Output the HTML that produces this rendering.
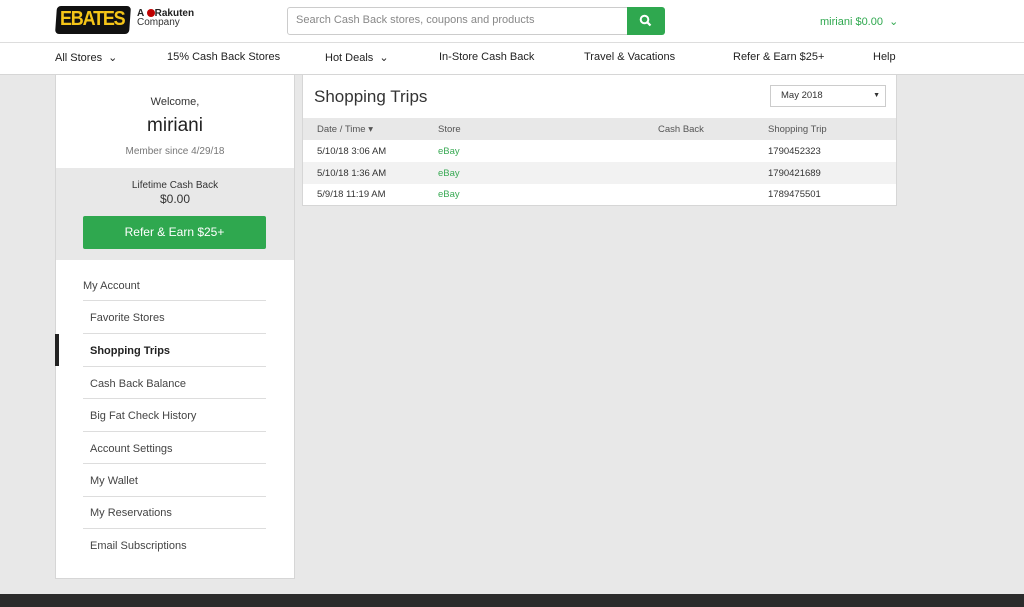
<!DOCTYPE html>
<html><head><meta charset="utf-8"><style>
*{margin:0;padding:0;box-sizing:border-box}
body{width:1024px;height:607px;background:#e8e8e8;font-family:"Liberation Sans",sans-serif;color:#333;position:relative;overflow:hidden;font-size:11px}
.abs{position:absolute}
#hdr{left:0;top:0;width:1024px;height:43px;background:#fff;border-bottom:1px solid #ddd}
#nav{left:0;top:43px;width:1024px;height:32px;background:#fff;border-bottom:1px solid #d6d6d6}
.nv{top:51px;font-size:11px;color:#222}
#foot{left:0;top:594px;width:1024px;height:13px;background:#2b2b2b}
#side{left:55px;top:75px;width:240px;height:504px;background:#fff;border:1px solid #d6d6d6;border-top:none}
.mi{position:absolute;left:34px;font-size:11px;color:#444}
.ln{position:absolute;left:27px;width:183px;height:1px;background:#ddd}
#main{left:302px;top:75px;width:595px;height:131px;background:#fff;border:1px solid #d6d6d6;border-top:none}
.row{position:absolute;left:0;width:593px;height:22px;font-size:9.5px;line-height:23px}
.row span{position:absolute}
</style></head><body>
<div id="hdr" class="abs"></div>
<div class="abs" style="left:56px;top:6px;width:74px;height:28px;background:#111;border-radius:4px;transform:skewX(-4deg)"></div>
<div class="abs" style="left:60px;top:8px;font:bold 18px 'Liberation Sans';color:#f5c518;letter-spacing:-1.2px;transform:scaleY(1.15)">EBATES</div>
<div class="abs" style="left:137px;top:8px;font-size:10px;font-weight:bold;color:#222">A <span style="display:inline-block;width:8px;height:8px;border-radius:50%;background:#bf0000;vertical-align:-1px"></span>Rakuten</div>
<div class="abs" style="left:137px;top:17px;font-size:10px;color:#333">Company</div>
<div class="abs" style="left:287px;top:7px;width:341px;height:28px;border:1px solid #ccc;border-radius:3px 0 0 3px;background:#fff"></div>
<div class="abs" style="left:296px;top:14px;font-size:11px;color:#888">Search Cash Back stores, coupons and products</div>
<div class="abs" style="left:627px;top:7px;width:38px;height:28px;background:#2fa84f;border-radius:0 3px 3px 0"></div>
<svg class="abs" style="left:639px;top:14px" width="13" height="13" viewBox="0 0 13 13"><circle cx="5.5" cy="5.5" r="3.8" fill="none" stroke="#fff" stroke-width="2"/><path d="M8.3 8.3l3.2 3.2" stroke="#fff" stroke-width="2.2"/></svg>
<div class="abs" style="left:820px;top:15px;font-size:11px;color:#2fa84f">miriani $0.00 &nbsp;⌄</div>
<div id="nav" class="abs"></div>
<div class="abs nv" style="left:55px">All Stores &nbsp;⌄</div>
<div class="abs nv" style="left:167px">15% Cash Back Stores</div>
<div class="abs nv" style="left:325px">Hot Deals &nbsp;⌄</div>
<div class="abs nv" style="left:439px">In-Store Cash Back</div>
<div class="abs nv" style="left:584px">Travel &amp; Vacations</div>
<div class="abs nv" style="left:733px">Refer &amp; Earn $25+</div>
<div class="abs nv" style="left:873px">Help</div>

<div id="side" class="abs">
<div style="position:absolute;top:21px;width:100%;text-align:center;font-size:11px">Welcome,</div>
<div style="position:absolute;top:40px;width:100%;text-align:center;font-size:19px;color:#222">miriani</div>
<div style="position:absolute;top:71px;width:100%;text-align:center;font-size:10px;color:#777">Member since 4/29/18</div>
<div style="position:absolute;top:93px;left:0;width:238px;height:92px;background:#e8e8e8"></div>
<div style="position:absolute;top:105px;width:100%;text-align:center;font-size:10px">Lifetime Cash Back</div>
<div style="position:absolute;top:117px;width:100%;text-align:center;font-size:12px">$0.00</div>
<div style="position:absolute;top:141px;left:27px;width:183px;height:33px;background:#2fa84f;border-radius:2px;color:#fff;text-align:center;line-height:33px;font-size:12px">Refer &amp; Earn $25+</div>
<div class="mi" style="left:27px;top:205px">My Account</div>
<div class="ln" style="top:225px"></div>
<div class="mi" style="top:237px">Favorite Stores</div>
<div class="ln" style="top:258px"></div>
<div style="position:absolute;left:-1px;top:259px;width:4px;height:32px;background:#222"></div>
<div class="mi" style="top:270px;font-weight:bold;color:#222">Shopping Trips</div>
<div class="ln" style="top:291px"></div>
<div class="mi" style="top:303px">Cash Back Balance</div>
<div class="ln" style="top:323px"></div>
<div class="mi" style="top:335px">Big Fat Check History</div>
<div class="ln" style="top:356px"></div>
<div class="mi" style="top:368px">Account Settings</div>
<div class="ln" style="top:388px"></div>
<div class="mi" style="top:400px">My Wallet</div>
<div class="ln" style="top:421px"></div>
<div class="mi" style="top:432px">My Reservations</div>
<div class="ln" style="top:453px"></div>
<div class="mi" style="top:465px">Email Subscriptions</div>
</div>

<div id="main" class="abs">
<div style="position:absolute;left:11px;top:12px;font-size:17px;color:#333">Shopping Trips</div>
<div style="position:absolute;left:467px;top:10px;width:116px;height:22px;border:1px solid #ccc;background:#fff;font-size:9.5px;line-height:20px;padding-left:10px">May 2018<span style="position:absolute;right:5px;font-size:7px">▼</span></div>
<div class="row" style="top:43px;background:#e8e8e8;color:#555"><span style="left:14px">Date / Time ▾</span><span style="left:135px">Store</span><span style="left:355px">Cash Back</span><span style="left:465px">Shopping Trip</span></div>
<div class="row" style="top:65px"><span style="left:14px">5/10/18 3:06 AM</span><span style="left:135px;color:#3aaa55">eBay</span><span style="left:465px">1790452323</span></div>
<div class="row" style="top:87px;background:#f2f2f2"><span style="left:14px">5/10/18 1:36 AM</span><span style="left:135px;color:#3aaa55">eBay</span><span style="left:465px">1790421689</span></div>
<div class="row" style="top:108px"><span style="left:14px">5/9/18 11:19 AM</span><span style="left:135px;color:#3aaa55">eBay</span><span style="left:465px">1789475501</span></div>
</div>
<div id="foot" class="abs"></div>
</body></html>
